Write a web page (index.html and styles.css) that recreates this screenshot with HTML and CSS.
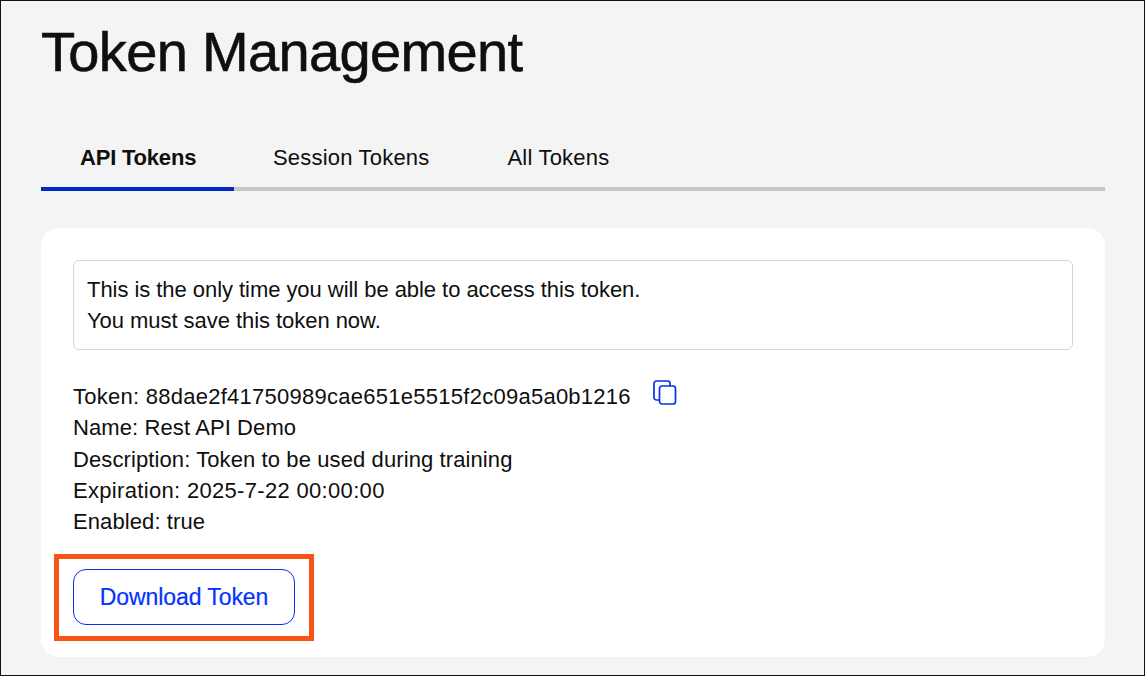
FILE: index.html
```html
<!DOCTYPE html>
<html lang="en">
<head>
<meta charset="utf-8">
<title>Token Management</title>
<link rel="stylesheet" href="styles.css">
</head>
<body>
<main class="frame">
  <h1 class="title">Token Management</h1>
  <nav class="tabs">
    <a class="tab tab-active">API Tokens</a>
    <a class="tab">Session Tokens</a>
    <a class="tab">All Tokens</a>
  </nav>
  <section class="card">
    <div class="notice">
      <p>This is the only time you will be able to access this token.</p>
      <p>You must save this token now.</p>
    </div>
    <div class="details">
      <div class="detail numeric token-row">
        <span>Token: 88dae2f41750989cae651e5515f2c09a5a0b1216</span>
        <svg class="copy" width="26" height="28" viewBox="0 0 26 28" fill="none" stroke="#0a2fe8" stroke-width="1.7" aria-hidden="true">
          <path d="M7.5 21H4.5a2.5 2.5 0 0 1-2.5-2.5V4.5A2.5 2.5 0 0 1 4.5 2h11a2.5 2.5 0 0 1 2.5 2.5V7"/>
          <rect x="7.5" y="7" width="16" height="18" rx="2.5"/>
        </svg>
      </div>
      <div class="detail">Name: Rest API Demo</div>
      <div class="detail">Description: Token to be used during training</div>
      <div class="detail numeric wide">Expiration: 2025-7-22 00:00:00</div>
      <div class="detail">Enabled: true</div>
    </div>
    <div class="action">
      <button class="download" type="button">Download Token</button>
      <span class="highlight"></span>
    </div>
  </section>
</main>
</body>
</html>
```
FILE: styles.css
```css
* { box-sizing: border-box; }
html, body { margin: 0; height: 100%; }
body {
  font-family: "Liberation Sans", Arial, sans-serif;
  color: #0f0f0e;
  background: #f4f4f4;
}
.frame {
  height: 676px;
  border: 1px solid #111;
  padding: 0 39px 0 40px;
  overflow: hidden;
}
.title {
  margin: 0;
  padding-top: 19px;
  font-size: 56px;
  line-height: 64px;
  font-weight: 400;
  letter-spacing: -0.65px;
  -webkit-text-stroke: 0.6px #0f0f0e;
}
.tabs {
  display: flex;
  margin-top: 52px;
  height: 55px;
  border-bottom: 4px solid #c8c8c8;
}
.tab {
  height: 55px;
  padding: 0 39px;
  font-size: 22px;
  line-height: 44px;
  letter-spacing: 0.2px;
  white-space: nowrap;
}
.tab-active {
  width: 193px;
  font-weight: 700;
  letter-spacing: -0.2px;
  border-bottom: 4px solid #0328c8;
}
.card {
  margin-top: 37px;
  height: 429px;
  padding: 32px;
  background: #fff;
  border-radius: 18px;
}
.notice {
  height: 90px;
  padding: 13px 13px;
  border: 1px solid #d6d6d6;
  border-radius: 6px;
  font-size: 22px;
  line-height: 31px;
  letter-spacing: -0.05px;
}
.notice p { margin: 0; }
.details {
  margin-top: 31px;
  font-size: 22px;
  line-height: 31.25px;
  letter-spacing: 0.1px;
}
.detail { height: 31.25px; }
.numeric { letter-spacing: 0.26px; }
.wide { letter-spacing: 0.32px; }
.token-row {
  display: flex;
  align-items: flex-start;
  gap: 21px;
}
.copy { margin-top: -2px; flex: none; }
.action {
  position: relative;
  margin-top: 31.75px;
  width: 222px;
}
.download {
  display: block;
  width: 222px;
  height: 56px;
  padding: 0;
  font: 400 23px "Liberation Sans", Arial, sans-serif;
  letter-spacing: -0.08px;
  -webkit-text-stroke: 0.2px #0433ff;
  color: #0433ff;
  background: #fff;
  border: 1px solid #0a2fe0;
  border-radius: 13px;
}
.highlight {
  position: absolute;
  left: -19px;
  top: -15px;
  width: 260px;
  height: 87px;
  border: 5px solid #f85415;
}
```
